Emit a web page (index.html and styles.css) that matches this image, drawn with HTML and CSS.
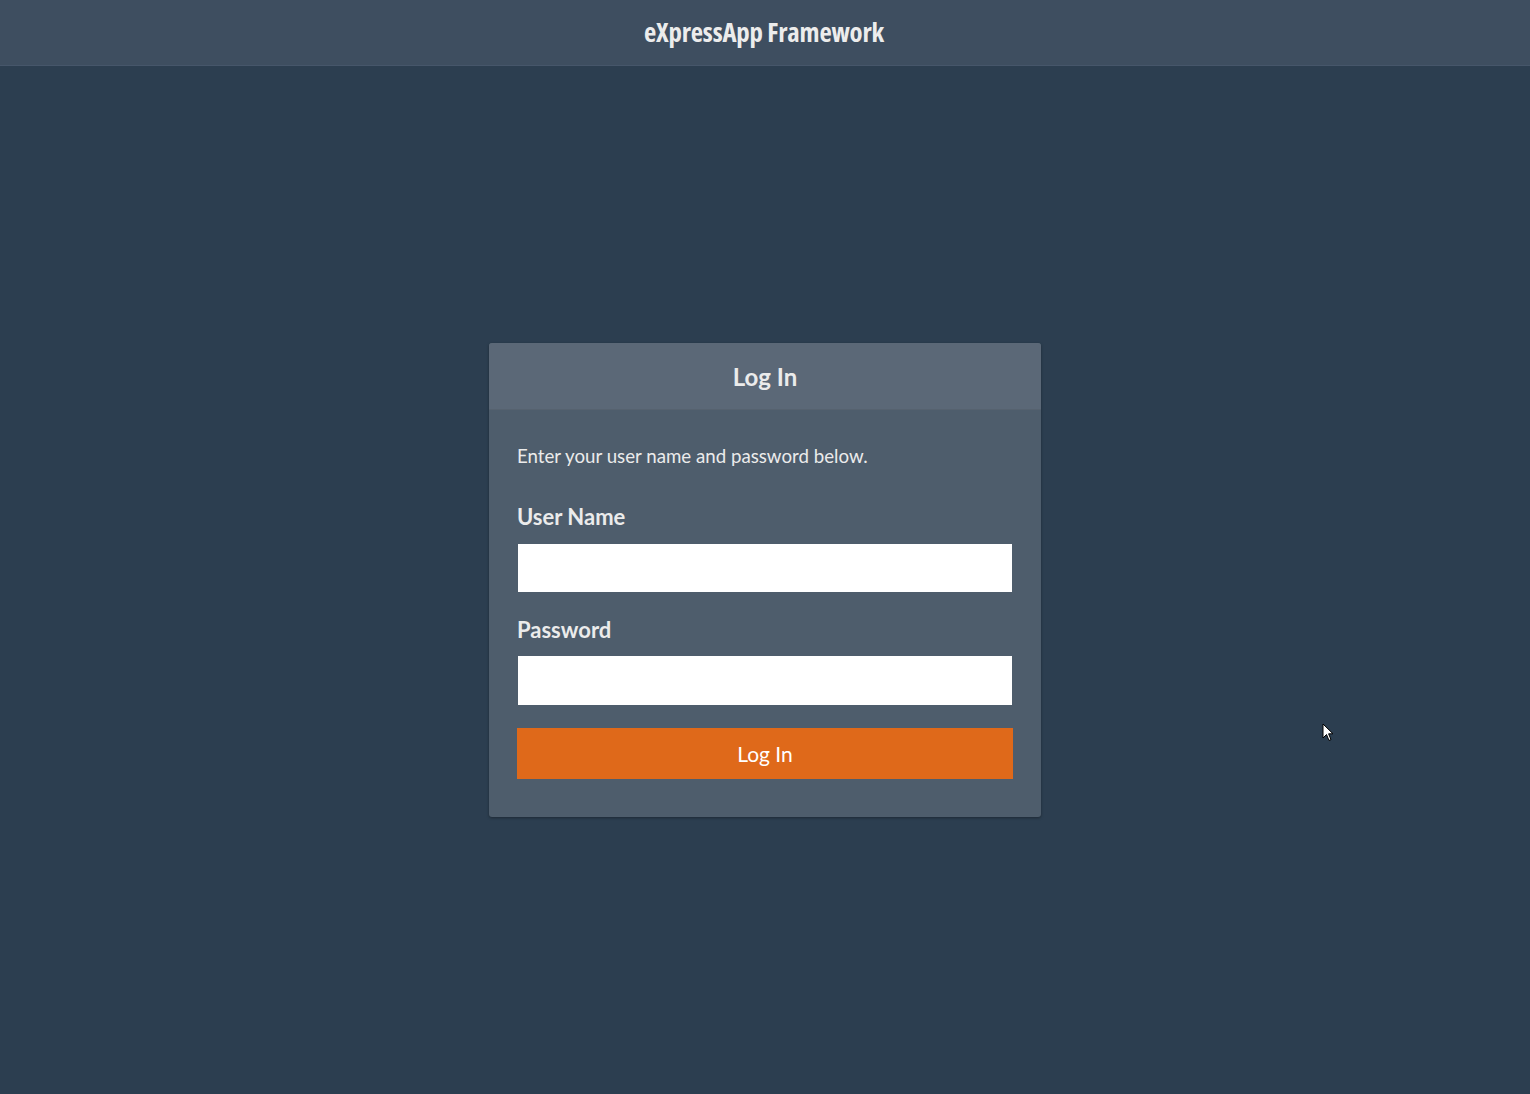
FILE: index.html
```html
<!DOCTYPE html>
<html>
<head>
<meta charset="utf-8">
<title>Log In</title>
<link rel="stylesheet" href="styles.css">
</head>
<body>
<header class="topbar">
  <div class="app-title">eXpressApp Framework</div>
</header>
<main class="main">
  <section class="card">
    <div class="card-header">Log In</div>
    <div class="card-body">
      <p class="intro">Enter your user name and password below.</p>
      <label class="field-label" for="user">User Name</label>
      <input class="field-input" id="user" type="text">
      <label class="field-label field-label-2" for="pwd">Password</label>
      <input class="field-input field-input-2" id="pwd" type="password">
      <button class="login-btn" type="button">Log In</button>
    </div>
  </section>
</main>
<svg class="cursor" width="12" height="19" viewBox="0 0 12 19">
  <path d="M1 1 L1 15 L4.5 11.5 L7 17.5 L9 16.6 L6.6 10.8 L11 10.8 Z" fill="#fff" stroke="#000" stroke-width="1"/>
</svg>
</body>
</html>
```
FILE: styles.css
```css
html, body {
  margin: 0;
  padding: 0;
}
body {
  background: #2c3e50;
  min-height: 1094px;
  font-family: Lato, "Liberation Sans", sans-serif;
  color: #ebebeb;
  position: relative;
}
.topbar {
  height: 65px;
  background: #3e4e60;
  border-bottom: 1px solid #46566a;
  display: flex;
  align-items: center;
  justify-content: center;
}
.app-title {
  font-family: "Open Sans", "Liberation Sans", sans-serif;
  font-stretch: 75%;
  font-weight: 700;
  font-size: 26.8px;
  color: #ececec;
  letter-spacing: -0.2px;
  margin-top: -2px;
  margin-left: -2px;
}
.main {
  display: flex;
  justify-content: center;
  padding-top: 277px;
}
.card {
  width: 552px;
  background: #4e5d6c;
  border-radius: 3px;
  box-shadow: 0 1px 3px rgba(0,0,0,0.35);
  overflow: hidden;
}
.card-header {
  height: 67px;
  background: #5b6877;
  border-bottom: 1px solid #56626f;
  box-sizing: border-box;
  display: flex;
  align-items: center;
  justify-content: center;
  font-weight: 700;
  font-size: 24px;
  color: #ebebeb;
}
.card-body {
  padding: 34px 28px 38px;
  display: flex;
  flex-direction: column;
}
.intro {
  margin: 0;
  font-size: 18.7px;
  line-height: 24px;
  color: #ebebeb;
}
.field-label {
  display: block;
  font-weight: 700;
  font-size: 22px;
  line-height: 28px;
  margin-top: 35px;
  margin-bottom: 13px;
  color: #ebebeb;
}
.field-label-2 {
  margin-top: 24px;
  margin-bottom: 12px;
}
.field-input {
  height: 48px;
  box-sizing: border-box;
  border: 0;
  border-left: 1px solid #4e5d6c;
  border-right: 1px solid #4e5d6c;
  background: #fff;
  margin: 0;
  padding: 0 12px;
  font-family: inherit;
  font-size: 18px;
  outline: none;
}
.field-input-2 {
  height: 49px;
}
.login-btn {
  margin-top: 23px;
  height: 51px;
  border: none;
  background: #df691a;
  color: #fff;
  font-family: Lato, "Liberation Sans", sans-serif;
  font-size: 21px;
  cursor: pointer;
  padding: 0;
}
.cursor {
  position: absolute;
  left: 1322px;
  top: 723px;
}
```
